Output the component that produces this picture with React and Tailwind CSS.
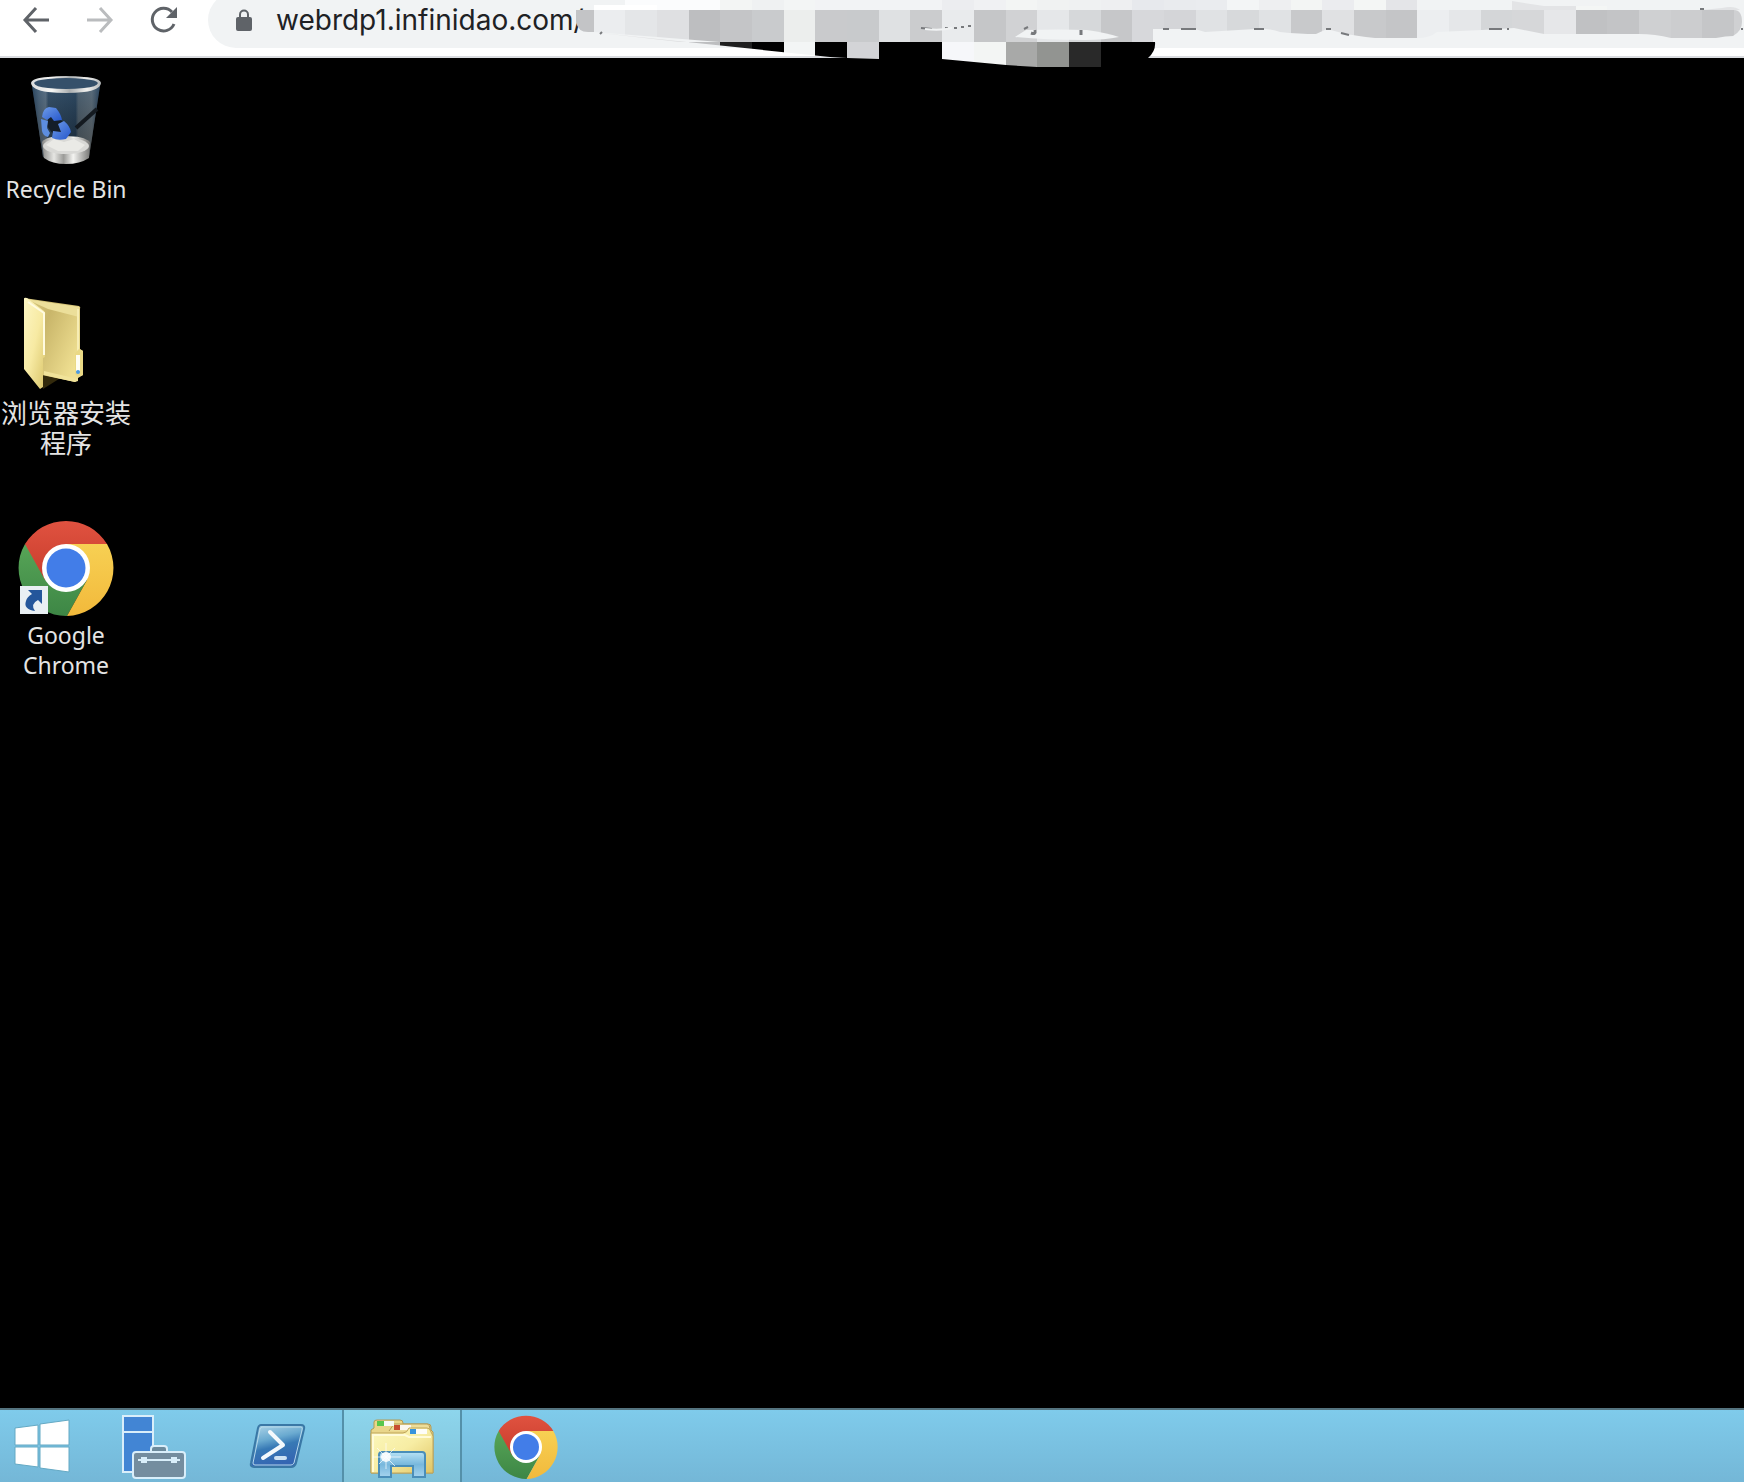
import { useState } from "react";

// Colours of the blurred part of the address, one per 32px cell: [x, colour]
const topCells = [
  [625, "#fbfcfd"],
  [720, "#f3f5f4"],
  [752, "#eff1f2"],
  [784, "#f3f5f5"],
  [815, "#f2f3f5"],
  [942, "#ecedf0"],
  [974, "#f0f1f3"],
  [1006, "#f3f5f4"],
  [1037, "#f0f2f2"],
  [1069, "#eff1f2"],
  [1101, "#eeeff1"],
  [1132, "#e7e9ed"],
  [1164, "#e9ebee"],
  [1196, "#eaecef"],
  [1227, "#f3f5f6"],
  [1259, "#eeeff1"],
  [1291, "#f3f5f4"],
  [1322, "#ebecef"],
  [1354, "#f4f6f5"],
  [1386, "#e4e5e8"],
];

const mainCells = [
  [576, "#c3c4c6"],
  [594, "#ebedef"],
  [625, "#e4e6e8"],
  [657, "#dfe0e2"],
  [689, "#bdbec0"],
  [720, "#c4c5c7"],
  [752, "#c9cbcd"],
  [784, "#eceeed"],
  [815, "#c9cacc"],
  [847, "#c8cacc"],
  [879, "#dfe1e3"],
  [910, "#cbccce"],
  [942, "#e9ebed"],
  [974, "#c5c6c8"],
  [1006, "#d1d2d4"],
  [1037, "#e5e7e9"],
  [1069, "#d6d8da"],
  [1101, "#c6c7c9"],
  [1132, "#d7d8db"],
  [1164, "#d4d5d8"],
  [1196, "#e0e2e4"],
  [1227, "#d7d9db"],
  [1259, "#e0e2e4"],
  [1291, "#c8c9cb"],
  [1322, "#e0e1e3"],
  [1354, "#c8c9cb"],
  [1386, "#c4c5c7"],
  [1417, "#eceef0"],
  [1449, "#e5e7e9"],
  [1481, "#d4d6d8"],
  [1512, "#d6d7d9"],
  [1544, "#e6e7e9"],
  [1576, "#c0c1c3"],
  [1607, "#c3c4c6"],
  [1639, "#cfd0d2"],
  [1671, "#cccdcf"],
  [1702, "#c5c6c8"],
  [1734, "#cfd0d2"],
];

const bottomCells = [
  [689, "#bdbec0"],
  [720, "#1f1f1f"],
  [752, "#000000"],
  [784, "#f3f5f5"],
  [815, "#000000"],
  [847, "#d3d4d7"],
  [879, "#000000"],
  [942, "#f6f7fa"],
  [974, "#f3f5f4"],
  [1006, "#a8a9a8"],
  [1037, "#929491"],
  [1069, "#292929"],
  [1101, "#000000"],
];

function Cells({ cells, y, height, end }) {
  return cells.map(([x, color], i) => (
    <rect
      key={x}
      x={x}
      y={y}
      width={(cells[i + 1] ? cells[i + 1][0] : end) - x}
      height={height}
      fill={color}
      shapeRendering="crispEdges"
    />
  ));
}

function Mosaic() {
  return (
    <svg
      className="pointer-events-none absolute left-0 top-0 z-10"
      width="1744"
      height="75"
      viewBox="0 0 1744 75"
      aria-hidden="true"
    >
      <clipPath id="mosaicTop">
        <rect x="576" y="0" width="1168" height="10" />
      </clipPath>
      <clipPath id="mosaicMain">
        <path d="M576 10H1734Q1742 10 1742 22Q1742 31 1733 36Q1726 36 1716 38L1671 38Q1655 34 1639 34H1544L1514 28L1482 30L1437 32Q1430 38 1417 38H1375Q1356 36 1342 33L1327 29L1316 34Q1300 34 1280 32Q1270 28 1255 29L1205 32L1195 29H1153V42H720L594 32H588Q578 32 576 22Z" />
      </clipPath>
      <clipPath id="mosaicBottom">
        <path d="M600 33L830 57L847 58L879 59H942L1006 65L1037 67H1101V58H1148Q1156 51 1155 42V42H680Z" />
      </clipPath>
      <g clipPath="url(#mosaicTop)">
        <Cells cells={topCells} y={0} height={10} end={1417} />
        <rect x="594" y="5" width="63" height="5" fill="#ffffff" />
        <path d="M1512 1L1544 6H1576V10H1512Z" fill="#e3e4e6" />
        <path d="M1722 8Q1734 5 1740 10H1702Z" fill="#e2e3e5" />
        <rect x="1576" y="6" width="31" height="4" fill="#f4f6f5" />
      </g>
      <g clipPath="url(#mosaicMain)">
        <Cells cells={mainCells} y={10} height={32} end={1744} />
      </g>
      <g clipPath="url(#mosaicBottom)">
        <Cells cells={bottomCells} y={42} height={25} end={1157} />
        <rect x="600" y="32" width="89" height="10" fill="#dddedf" />
      </g>
      <path d="M1015 37L1026 30Q1060 29 1087 30Q1107 33 1119 37Q1105 40 1085 40Q1045 40 1015 37Z" fill="#f1f3f4" />
      <path d="M600 34L602 32" stroke="#77797c" strokeWidth="2" />
      <path d="M1031 33Q1036 35 1035 30M1081 30V35" stroke="#77797c" strokeWidth="3" fill="none" />
      <path d="M1024 29L1028 27M921 28L932 29M945 28H948M954 28H957M961 27H964M968 26H971M1163 29H1169M1181 29H1196M1254 29H1264M1326 29H1331M1341 33L1349 35M1489 29H1502M1507 29H1509M1700 9H1704M1741 29H1743" stroke="#77797c" strokeWidth="2" />
      <path d="M925 29Q940 31 952 28" stroke="#f1f3f4" strokeWidth="2" fill="none" />
    </svg>
  );
}

function BackIcon() {
  return (
    <svg width="28" height="28" viewBox="0 0 28 28" fill="none" stroke="currentColor" strokeWidth="3">
      <path d="M27 14H3M14 2L3 14L14 26" />
    </svg>
  );
}

function ForwardIcon() {
  return (
    <svg width="28" height="28" viewBox="0 0 28 28" fill="none" stroke="currentColor" strokeWidth="3">
      <path d="M1 14H25M14 2L25 14L14 26" />
    </svg>
  );
}

function ReloadIcon() {
  return (
    <svg width="28" height="28" viewBox="0 0 28 28" fill="none">
      <path d="M24 18A11.3 11.3 0 1 1 22 6" stroke="currentColor" strokeWidth="3" />
      <path d="M27 1V12H16Z" fill="currentColor" />
    </svg>
  );
}

function LockIcon() {
  return (
    <svg width="16" height="22" viewBox="0 0 16 22" fill="none" className="shrink-0">
      <rect y="8" width="16" height="14" rx="2" fill="#5f6368" />
      <path d="M4 9V5.500A4 4 0 0 1 12 5.500V9" stroke="#5f6368" strokeWidth="2" />
    </svg>
  );
}

function RecycleBinIcon() {
  return (
    <svg width="96" height="96" viewBox="0 0 96 96">
      <defs>
        <linearGradient id="binBody" x1="0" x2="1">
          <stop offset="0" stopColor="#1d3348" />
          <stop offset=".1" stopColor="#5d6f7f" />
          <stop offset=".2" stopColor="#7d8993" />
          <stop offset=".24" stopColor="#33485b" />
          <stop offset=".64" stopColor="#22384c" />
          <stop offset=".68" stopColor="#636b6e" />
          <stop offset=".88" stopColor="#7d8180" />
          <stop offset="1" stopColor="#1b2f45" />
        </linearGradient>
        <linearGradient id="binShade" x1="0" x2="0" y1="0" y2="1">
          <stop offset="0" stopColor="#3a5b7a" stopOpacity=".55" />
          <stop offset="1" stopColor="#080c10" stopOpacity=".4" />
        </linearGradient>
        <linearGradient id="binBase" x1="0" x2="1">
          <stop offset="0" stopColor="#8a8a88" />
          <stop offset=".25" stopColor="#e6e6e3" />
          <stop offset=".45" stopColor="#9b9b98" />
          <stop offset=".65" stopColor="#f4f4f1" />
          <stop offset="1" stopColor="#777775" />
        </linearGradient>
        <linearGradient id="binRim" x1="0" x2="1">
          <stop offset="0" stopColor="#d8dadb" />
          <stop offset=".3" stopColor="#f7f7f5" />
          <stop offset=".55" stopColor="#a9adaf" />
          <stop offset=".8" stopColor="#f0f0ee" />
          <stop offset="1" stopColor="#b4b8ba" />
        </linearGradient>
        <linearGradient id="binBlue" x1="0" y1="0" x2="1" y2="1">
          <stop offset="0" stopColor="#6f9ce8" />
          <stop offset="1" stopColor="#2456cc" />
        </linearGradient>
      </defs>
      <path d="M14 12L25 83Q48 92 71 83L82 12Z" fill="url(#binBody)" />
      <path d="M14 12L25 83Q48 92 71 83L82 12Z" fill="url(#binShade)" />
      <path d="M58 54L79 35" stroke="#141a20" strokeWidth="4" />
      <path d="M24 68Q28 62 47 62T72 68L71 84Q62 90 48 90T26 84Z" fill="url(#binBase)" />
      <ellipse cx="48" cy="72" rx="23" ry="8" fill="#d9d9d6" />
      <path d="M28 71L36 65L46 68L56 65L67 71L60 77L40 77Z" fill="#ededea" opacity=".8" />
      <path d="M31 41L43 46L48 52L44 58L35 60L29 52Z" fill="#141e2a" />
      <path d="M24 43Q25 34 31 33L38 34Q43 40 44 46L36 47L33 43L29 46Z" fill="url(#binBlue)" />
      <path d="M23 45L30 47L29 54L32 59L30 63Q25 62 24 57Z" fill="#5d8ee0" />
      <path d="M40 50L46 47Q52 52 53 58L48 65Q40 67 34 64L35 57L43 58Z" fill="url(#binBlue)" />
      <path d="M13 9Q14 16 30 18Q48 20 66 18Q82 16 83 9Q82 4 66 3Q48 1 30 3Q14 4 13 9Z" fill="url(#binRim)" />
      <path d="M16 9Q17 13 30 14Q48 16 66 14Q79 13 80 9Q79 6 66 5Q48 3 30 5Q17 6 16 9Z" fill="#35506a" />
    </svg>
  );
}

function FolderIcon() {
  return (
    <svg width="96" height="96" viewBox="0 0 96 96">
      <defs>
        <linearGradient id="folderBack" x1="0" x2="1" y1="0" y2=".6">
          <stop offset="0" stopColor="#d9c982" />
          <stop offset=".4" stopColor="#c9b66a" />
          <stop offset="1" stopColor="#f0e092" />
        </linearGradient>
        <linearGradient id="folderFront" x1="0" x2="1" y1="0" y2="1">
          <stop offset="0" stopColor="#fdf6c4" />
          <stop offset=".5" stopColor="#f7eaa3" />
          <stop offset="1" stopColor="#d9c468" />
        </linearGradient>
      </defs>
      <path d="M25 72L44 80L25 92Z" fill="#332a0c" />
      <path d="M6 1L61 9Q63 10 62 12V52L65 54V78L60 81V84L57 85L24 78V20Z" fill="url(#folderBack)" />
      <path d="M8 2L61 10V20L30 12Z" fill="#ecdf9a" />
      <path d="M26 74L60 82L57 85L26 78Z" fill="#f1e39a" />
      <path d="M60 54V12" stroke="#f7edb4" strokeWidth="2" />
      <path d="M6 2Q6 0 9 1L26 14Q28 16 27 19V60L25 61V90L22 92L6 72Z" fill="url(#folderFront)" />
      <path d="M10 5L26 16V58" fill="none" stroke="#fffbe0" strokeWidth="2" />
      <path d="M57 56L61 52L65 54V78L60 80L57 77Z" fill="#ead985" />
      <path d="M60 58V74" stroke="#fffef2" strokeWidth="4" />
      <circle cx="60" cy="75" r="2" fill="#4d9be0" />
    </svg>
  );
}

function ChromeIcon({ size, id, shortcut }) {
  return (
    <svg width={size} height={size} viewBox="0 0 96 96">
      <defs>
        <linearGradient id={id + "Red"} x1="0" x2="0" y1="0" y2="1">
          <stop offset="0" stopColor="#e05240" />
          <stop offset="1" stopColor="#c83d2c" />
        </linearGradient>
        <linearGradient id={id + "Yellow"} x1="0" x2="0" y1="0" y2="1">
          <stop offset="0" stopColor="#f7d053" />
          <stop offset="1" stopColor="#f2b93b" />
        </linearGradient>
        <linearGradient id={id + "Green"} x1="0" x2="0" y1="0" y2="1">
          <stop offset="0" stopColor="#57a557" />
          <stop offset="1" stopColor="#3d8645" />
        </linearGradient>
      </defs>
      <path d="M7 24A48 48 0 0 0 49 96L69 60L48 48Z" fill={`url(#${id}Green)`} />
      <path d="M89 24A48 48 0 0 1 49 96L69 60L48 48V24Z" fill={`url(#${id}Yellow)`} />
      <path d="M7 24A48 48 0 0 1 89 24H48V48L27 60Z" fill={`url(#${id}Red)`} />
      <circle cx="48" cy="48" r="24" fill="#ffffff" />
      <circle cx="48" cy="48" r="19.500" fill="#427de8" />
      {shortcut && (
        <g>
          <rect x="2" y="66" width="28" height="28" fill="#e9eff3" />
          <path d="M10 70H24V84L20 80Q12 84 17 91Q5 89 8 81Q9 77 14 74Z" fill="#24569b" />
        </g>
      )}
    </svg>
  );
}

function WindowsIcon() {
  return (
    <svg width="56" height="54" viewBox="0 0 56 54" fill="#ffffff" stroke="#64a9c4" strokeWidth="1">
      <path d="M1 9L24 6V26H1ZM26 5L55 1V26H26ZM1 28H24V48L1 45ZM26 28H55V53L26 49Z" />
    </svg>
  );
}

function ServerIcon() {
  return (
    <svg width="64" height="66" viewBox="0 0 64 66" stroke="#d9eefa" strokeWidth="2">
      <path d="M1 2H31V58H1Z" fill="#4285d4" />
      <path d="M1 18H31" />
      <path d="M29 38V35Q29 32 32 32H42Q45 32 45 35V38" fill="#6d8a9c" />
      <rect x="11" y="38" width="52" height="26" rx="3" fill="#748d9f" />
      <path d="M16 46H58" />
      <path d="M20 44H24V48H20ZM50 44H54V48H50Z" fill="#d9eefa" />
    </svg>
  );
}

function PowerShellIcon() {
  return (
    <svg width="58" height="48" viewBox="0 0 58 48">
      <defs>
        <linearGradient id="psBody" x1="0" x2=".3" y1="0" y2="1">
          <stop offset="0" stopColor="#b4d9eb" />
          <stop offset=".4" stopColor="#6aaad0" />
          <stop offset=".6" stopColor="#3779b5" />
          <stop offset="1" stopColor="#3565b2" />
        </linearGradient>
      </defs>
      <path d="M12 2H52Q56 2 55 6L47 40Q46 44 42 44H5Q1 44 2 40L9 5Q10 2 12 2Z" fill="url(#psBody)" stroke="#3a78a6" strokeWidth="2" />
      <path d="M13 4H52Q54 4 53 7L45 40Q44 42 42 42H6Q4 42 4 40L11 6Z" fill="none" stroke="#b6d9ea" strokeWidth="1" />
      <path d="M21 9L34 22L14 35" fill="none" stroke="#f4f9fc" strokeWidth="4" strokeLinejoin="round" strokeLinecap="round" />
      <path d="M27 35H36" stroke="#cfe2f3" strokeWidth="4" strokeLinecap="round" />
    </svg>
  );
}

function ExplorerIcon() {
  return (
    <svg width="66" height="60" viewBox="0 0 66 60" className="mt-1">
      <defs>
        <linearGradient id="exFolder" x1="0" x2="1" y1="0" y2="1">
          <stop offset="0" stopColor="#fcf8bc" />
          <stop offset=".5" stopColor="#f7eda4" />
          <stop offset="1" stopColor="#e0c463" />
        </linearGradient>
        <linearGradient id="exStand" x1="0" x2="0" y1="0" y2="1">
          <stop offset="0" stopColor="#b7e2f5" />
          <stop offset=".5" stopColor="#78b8dd" />
          <stop offset="1" stopColor="#a5d3ee" />
        </linearGradient>
      </defs>
      <path d="M2 54V11L5 9V3Q5 1 8 1H31Q34 1 34 4V5H59Q62 5 62 8V11L64 13V54Z" fill="#e9d68a" stroke="#b29a54" strokeWidth="1" />
      <path d="M20 12L25 5H58Q61 5 61 12" fill="#eddd99" stroke="#b59c58" />
      <rect x="8" y="2" width="7" height="5" fill="#58c74c" />
      <rect x="15" y="2" width="10" height="5" fill="#f7fbf5" />
      <rect x="25" y="6" width="6" height="5" fill="#c84d31" />
      <rect x="31" y="6" width="11" height="5" fill="#fbf7f0" />
      <path d="M2 14H34Q38 14 40 9H58Q61 9 62 13L64 17V54H2Z" fill="url(#exFolder)" stroke="#bfa45a" strokeWidth="1" />
      <path d="M4 53V16H36L40 18H62" fill="none" stroke="#fffbd8" strokeWidth="2" />
      <rect x="41" y="10" width="6" height="5" fill="#3793dc" />
      <rect x="47" y="10" width="11" height="5" fill="#fdfdf8" />
      <path d="M10 58V36Q10 33 13 33H53Q56 33 56 36V58H44V47H22V58Z" fill="url(#exStand)" stroke="#4a8eb9" strokeWidth="2" />
      <path d="M17 24V50M4 38H32M8 29L26 47M26 29L10 45" stroke="#ffffff" strokeWidth="1" opacity=".7" />
      <circle cx="17" cy="38" r="5" fill="#ffffff" opacity=".85" />
    </svg>
  );
}

const desktopIcons = [
  { name: "Recycle Bin", icon: <RecycleBinIcon /> },
  { name: "浏览器安装程序", icon: <FolderIcon />, cjk: true },
  { name: "Google Chrome", icon: <ChromeIcon size={96} id="desk" shortcut /> },
];

const taskbarItems = [
  { name: "Server Manager", icon: <ServerIcon /> },
  { name: "PowerShell", icon: <PowerShellIcon /> },
  { name: "File Explorer", icon: <ExplorerIcon /> },
  { name: "Google Chrome", icon: <ChromeIcon size={64} id="task" /> },
];

function AddressBar() {
  return (
    <header className="relative h-[58px] shrink-0 border-b-2 border-[#dadce0] bg-white">
      <div className="flex h-full items-start overflow-hidden pl-[22px]">
        <div className="flex h-10 items-center gap-9 pr-[30px] text-[#5f6368]">
          <button type="button" aria-label="Back">
            <BackIcon />
          </button>
          <button type="button" aria-label="Forward" disabled className="text-[#babcbe]">
            <ForwardIcon />
          </button>
          <button type="button" aria-label="Reload">
            <ReloadIcon />
          </button>
        </div>
        <div className="-mt-2 flex h-14 min-w-0 flex-1 items-center gap-6 rounded-l-full bg-[#f1f3f4] pl-7">
          <LockIcon />
          <input
            type="text"
            aria-label="Address"
            spellCheck={false}
            defaultValue="webrdp1.infinidao.com/"
            className="min-w-0 flex-1 bg-transparent font-[Inter,sans-serif] text-[28px] leading-8 text-[#202124] outline-none"
          />
        </div>
      </div>
      <Mosaic />
    </header>
  );
}

function Desktop() {
  return (
    <main className="flex flex-1 flex-col items-start bg-black pt-4">
      {desktopIcons.map((item) => (
        <button
          key={item.name}
          type="button"
          className="flex h-[223px] w-[132px] flex-col items-center gap-1 text-[#e4e4e4]"
        >
          {item.icon}
          <span
            className={
              item.cjk
                ? "text-center font-['Noto_Sans_CJK_SC',sans-serif] text-[26px] leading-[30px]"
                : "px-1 text-center font-['Noto_Sans',sans-serif] text-[23px] leading-[30px]"
            }
          >
            {item.name}
          </span>
        </button>
      ))}
    </main>
  );
}

function Taskbar() {
  const [active, setActive] = useState("File Explorer");

  return (
    <nav className="flex h-[74px] shrink-0 border-t-2 border-[#54737f] bg-linear-to-b from-[#7fcbeb] to-[#74b7d7]">
      <button type="button" aria-label="Start" className="flex w-[92px] items-center pl-[14px]">
        <WindowsIcon />
      </button>
      {taskbarItems.map((item) => (
        <button
          key={item.name}
          type="button"
          aria-label={item.name}
          onClick={() => setActive(item.name)}
          className={`mx-0.5 flex w-[120px] items-center justify-center pt-0.5 ${
            active === item.name
              ? "border-x-2 border-[#5490a9] bg-linear-to-b from-[#8dd5ec] to-[#80c2d9]"
              : ""
          }`}
        >
          {item.icon}
        </button>
      ))}
    </nav>
  );
}

function App() {
  return (
    <div className="flex min-h-screen flex-col overflow-hidden bg-black">
      <AddressBar />
      <Desktop />
      <Taskbar />
    </div>
  );
}

export default App;
